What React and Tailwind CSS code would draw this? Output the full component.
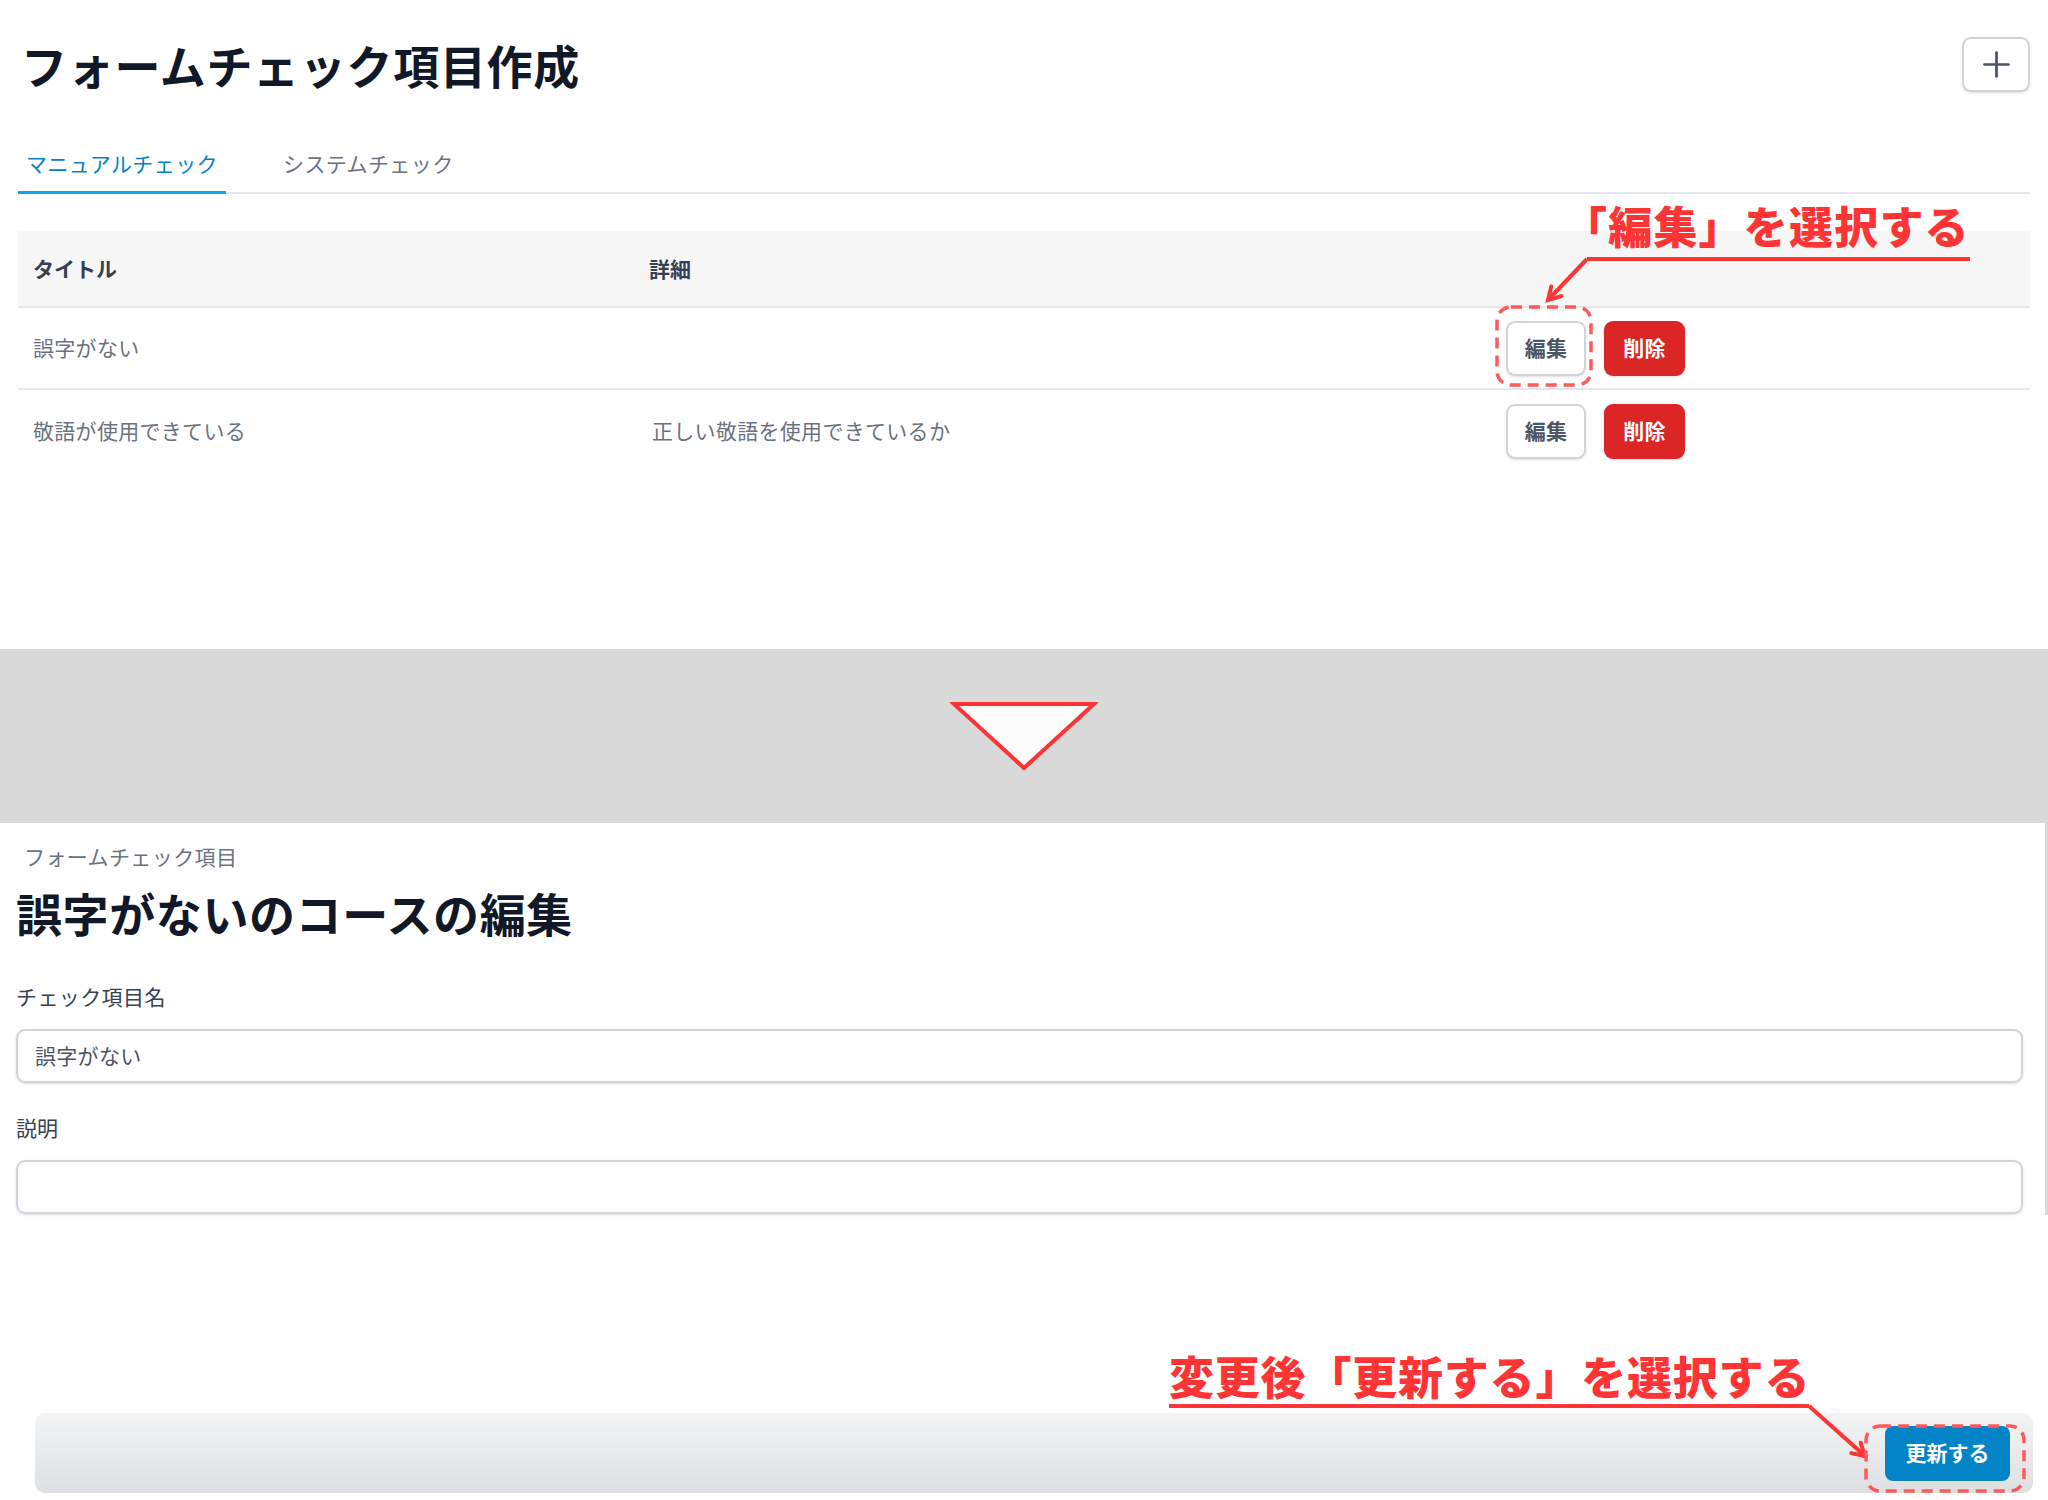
import React from 'react';
import { Plus } from 'lucide-react';

const rows = [
  { title: '誤字がない', detail: '', border: true },
  { title: '敬語が使用できている', detail: '正しい敬語を使用できているか', border: false },
];

export default function App() {
  return (
    <div className="relative w-[2048px] h-[1500px] overflow-hidden bg-white font-['Noto_Sans_CJK_JP','Noto_Sans',sans-serif]">

      {/* Top: list screen */}
      <div className="h-[649px] px-[18px]">
        <div className="flex items-center justify-between pt-[37px]">
          <h1 className="pl-[3px] text-[46px] font-bold leading-[55px] tracking-[0.7px] text-[#111827]">フォームチェック項目作成</h1>
          <button className="flex h-[55px] w-[68px] items-center justify-center rounded-[9px] border-2 border-[#d1d5db] bg-white shadow-sm">
            <Plus size={41} strokeWidth={1.6} color="#4b5563" />
          </button>
        </div>

        {/* Tabs */}
        <div className="mt-[55px] flex gap-[49px] border-b-2 border-[#e5e7eb]">
          <div className="-mb-[2px] border-b-[3px] border-[#0ea5e9] px-[8px] pb-[12px] text-[21px] leading-[32px] tracking-[0.4px] text-[#0284c7]">マニュアルチェック</div>
          <div className="-mb-[2px] border-b-[3px] border-transparent px-[8px] pb-[12px] text-[21px] leading-[32px] tracking-[0.4px] text-[#6b7280]">システムチェック</div>
        </div>

        {/* Table */}
        <div className="mt-[37px]">
          <div className="grid h-[77px] grid-cols-[616px_857px_1fr] items-center border-b-2 border-[#e5e7eb] bg-[#f7f7f8] text-[21px] font-bold text-[#374151]">
            <div className="px-[15px]">タイトル</div>
            <div className="px-[15px]">詳細</div>
            <div />
          </div>
          {rows.map((r) => (
            <div
              key={r.title}
              className={`grid h-[82px] grid-cols-[616px_857px_1fr] items-center text-[21px] tracking-[0.3px] text-[#6b7280] ${r.border ? 'border-b-2 border-[#e5e7eb]' : ''}`}
            >
              <div className="px-[15px]">{r.title}</div>
              <div className="px-[18px]">{r.detail}</div>
              <div className="flex gap-[18px] px-[15px]">
                <button className="h-[55px] w-[80px] rounded-[9px] border-2 border-[#d1d5db] bg-white text-[21px] font-bold text-[#4b5563] shadow-sm">編集</button>
                <button className="h-[55px] w-[81px] rounded-[9px] bg-[#dc2626] text-[21px] font-bold text-white shadow-sm">削除</button>
              </div>
            </div>
          ))}
        </div>
      </div>

      {/* Divider band with arrow */}
      <div className="flex h-[174px] items-center justify-center bg-[#d9d9d9]">
        <svg width="148" height="72" viewBox="0 0 148 72">
          <polygon points="4,4 144,4 74,68" fill="#fcfcfc" stroke="#ff3333" strokeWidth="4" strokeLinejoin="miter" />
        </svg>
      </div>

      {/* Bottom: edit screen */}
      <div className="flex flex-col">
        <div className="flex">
          <div className="flex-1 pl-[16px] pr-[22px]">
            <div className="mt-[17px] pl-[8px] text-[21px] leading-[32px] tracking-[0.4px] text-[#6b7280]">フォームチェック項目</div>
            <h2 className="mt-[10px] text-[46px] font-bold leading-[60px] tracking-[0.6px] text-[#111827]">誤字がないのコースの編集</h2>
            <div className="mt-[38px] text-[21px] leading-[32px] tracking-[0.4px] text-[#374151]">チェック項目名</div>
            <div className="mt-[17px] flex h-[54px] items-center rounded-[9px] border-2 border-[#d1d5db] px-[17px] text-[21px] tracking-[0.3px] text-[#4b5563] shadow-sm">誤字がない</div>
            <div className="mt-[28px] text-[21px] leading-[32px] text-[#374151]">説明</div>
            <div className="mt-[17px] h-[54px] rounded-[9px] border-2 border-[#d1d5db] shadow-sm" />
          </div>
          <div className="h-[392px] w-[3px] bg-[#dadada]" />
        </div>

        <div className="ml-[35px] mr-[15px] mt-[198px] flex h-[80px] items-center justify-end rounded-[10px] bg-gradient-to-b from-[#f3f4f6] to-[#dedfe2] pr-[23px]">
          <button className="h-[55px] w-[125px] rounded-[8px] bg-[#0284c7] text-[21px] font-bold text-white">更新する</button>
        </div>
      </div>

      {/* Annotation 1 */}
      <div className="absolute left-[1563px] top-[203px] text-[44px] font-black leading-none tracking-[1.2px] text-[#ff3535]">「編集」を選択する</div>
      <div className="absolute left-[1587px] top-[257px] h-[4px] w-[383px] bg-[#ff3535]" />
      <svg className="absolute left-[1540px] top-[255px]" width="52" height="52" viewBox="0 0 52 52">
        <path d="M47 4 L8 45" stroke="#ff3535" strokeWidth="4" fill="none" />
        <path d="M21.4 41.1 L8 45 L11.3 31.4" stroke="#ff3535" strokeWidth="4" fill="none" strokeLinecap="round" />
      </svg>
      <svg className="absolute left-[1495px] top-[305px]" width="98" height="82" viewBox="0 0 98 82">
        <rect x="2" y="2" width="94" height="78" rx="14" fill="none" stroke="#ff5a5a" strokeWidth="3.5" strokeDasharray="11 7" />
      </svg>

      {/* Annotation 2 */}
      <div className="absolute left-[1169px] top-[1353px] text-[45px] font-black leading-none tracking-[0.8px] text-[#ff3535]">変更後「更新する」を選択する</div>
      <div className="absolute left-[1169px] top-[1404px] h-[4px] w-[640px] bg-[#ff3535]" />
      <svg className="absolute left-[1800px] top-[1400px]" width="72" height="64" viewBox="0 0 72 64">
        <path d="M9 6 L65 56" stroke="#ff3535" strokeWidth="4" fill="none" />
        <path d="M60.6 42.7 L65 56 L51.3 53.1" stroke="#ff3535" strokeWidth="4" fill="none" strokeLinecap="round" />
      </svg>
      <svg className="absolute left-[1864px] top-[1424px]" width="162" height="69" viewBox="0 0 162 69">
        <rect x="2" y="2" width="158" height="65" rx="14" fill="none" stroke="#ff5a5a" strokeWidth="3.5" strokeDasharray="11 7" />
      </svg>
    </div>
  );
}
